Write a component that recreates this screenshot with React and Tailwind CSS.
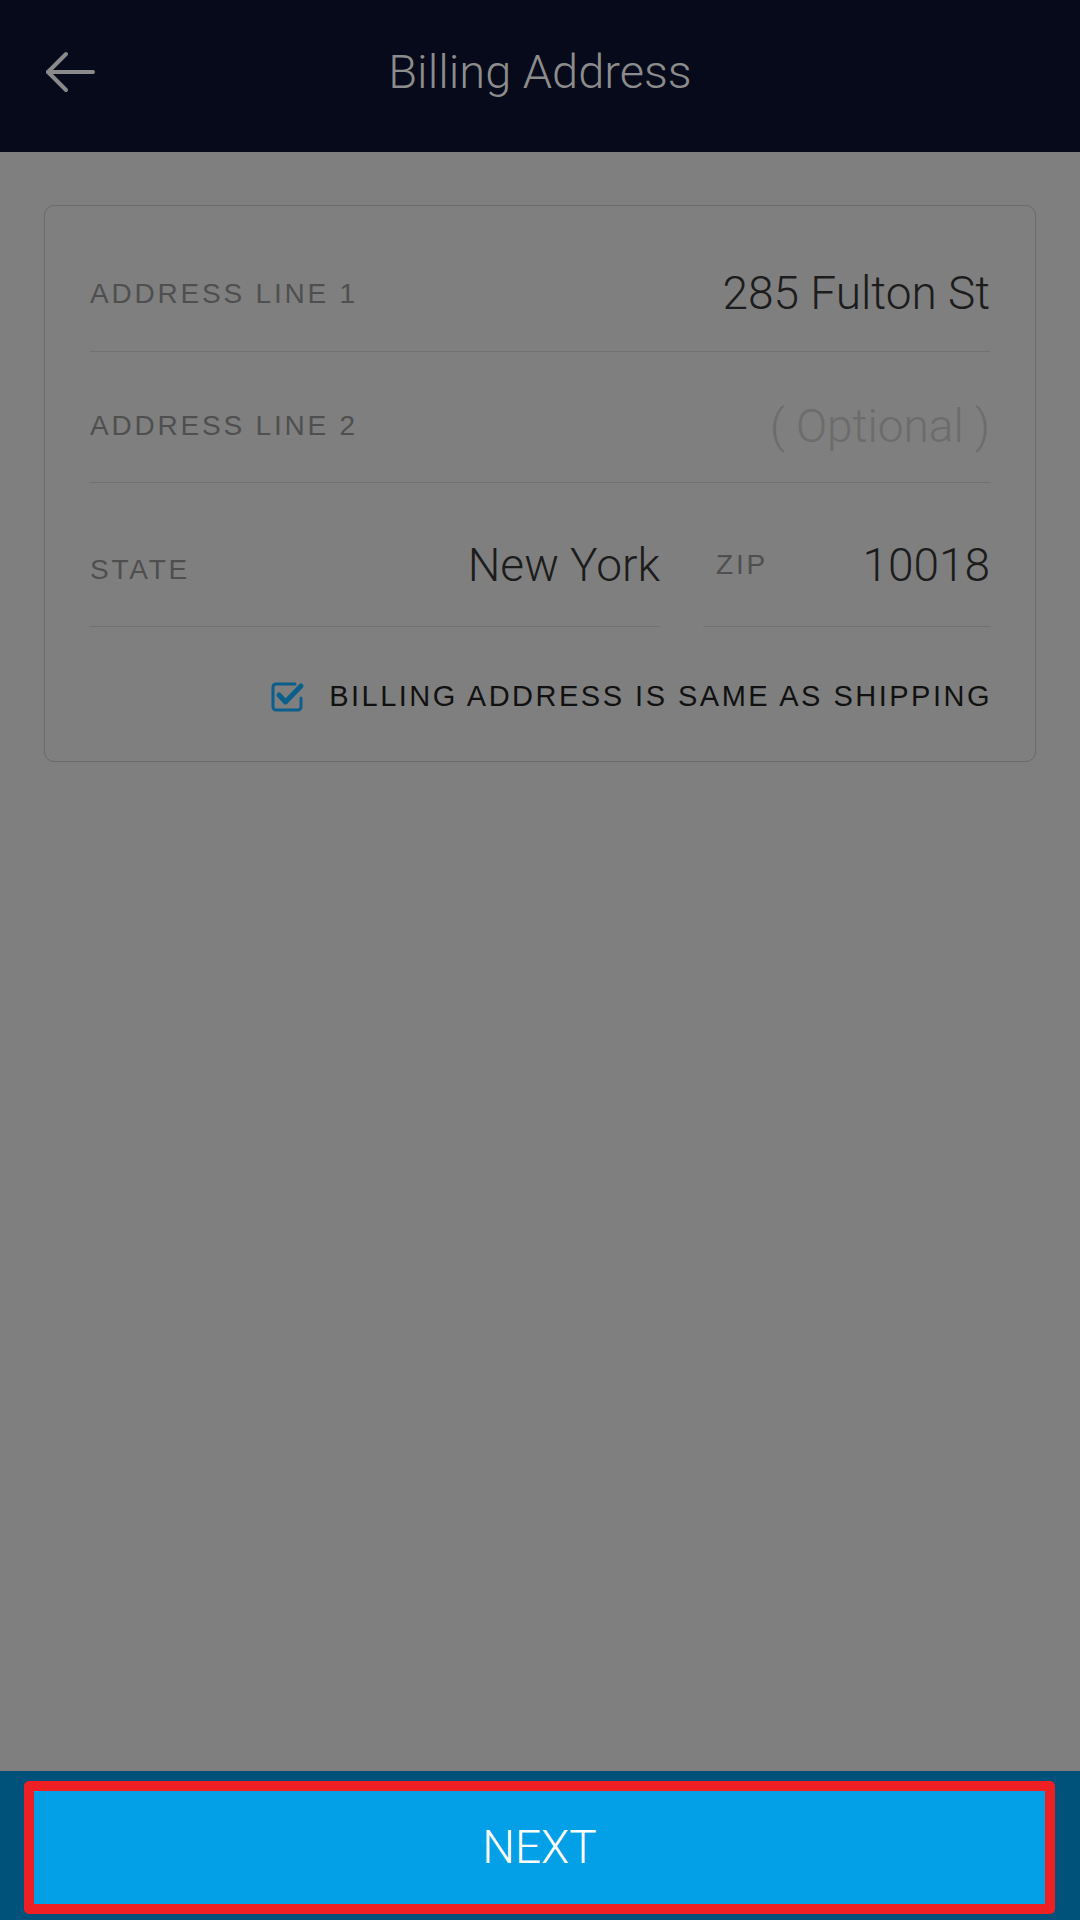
const font = { fontFamily: 'Roboto, "Liberation Sans", Arial, sans-serif' }
const capsFont = { fontFamily: '"Liberation Sans", Arial, sans-serif' }

function Label({ children, className = '' }) {
  return (
    <span style={capsFont} className={`text-[28px] tracking-[2.8px] text-[#4f4f4f] ${className}`}>{children}</span>
  )
}

function Value({ children, className = '' }) {
  return <span className={`text-[46px] font-light text-[#1c1c1c] ${className}`}>{children}</span>
}

function BackArrow() {
  return (
    <svg width="51" height="42" viewBox="0 0 51 42" fill="none" stroke="#8a8a8a" strokeWidth="4" strokeLinecap="round" strokeLinejoin="round">
      <path d="M3 21 H48" />
      <path d="M21 3 L3 21 L21 39" />
    </svg>
  )
}

function CheckIcon() {
  return (
    <svg width="34" height="32" viewBox="0 0 34 32" fill="none">
      <path
        d="M30 17 V26 a3 3 0 0 1 -3 3 H5 a3 3 0 0 1 -3 -3 V6 a3 3 0 0 1 3 -3 H24"
        stroke="#0b5f8c"
        strokeWidth="3"
        strokeLinecap="round"
      />
      <path d="M8 14 L14.5 21 L30 5" stroke="#0b5f8c" strokeWidth="5" strokeLinecap="round" strokeLinejoin="round" />
    </svg>
  )
}

export default function App() {
  return (
    <div style={font} className="w-[1080px] h-[1920px] flex flex-col bg-[#7f7f7f]">
      {/* Header */}
      <div className="h-[152px] shrink-0 bg-[#060a1a] grid grid-cols-[150px_1fr_150px] items-center pb-[8px]">
        <div className="pl-[45px] flex items-center">
          <BackArrow />
        </div>
        <h1 className="text-center text-[47px] font-light text-[#8c8c8c]">Billing Address</h1>
        <div />
      </div>

      {/* Form */}
      <div className="flex-1 px-[44px] pt-[53px]">
        <div className="border border-[#6a6a6a] rounded-[10px] px-[45px]">
          <div className="h-[146px] pt-[30px] flex items-center justify-between border-b border-[#727272]">
            <Label>ADDRESS LINE 1</Label>
            <Value>285 Fulton St</Value>
          </div>
          <div className="h-[131px] pt-[18px] flex items-center justify-between border-b border-[#727272]">
            <Label>ADDRESS LINE 2</Label>
            <span className="text-[46px] font-light text-[#6c6c6c]">( Optional )</span>
          </div>
          <div className="flex gap-[43px]">
            <div className="flex-1 h-[144px] pt-[22px] flex items-center justify-between border-b border-[#727272]">
              <Label className="mt-[8px]">STATE</Label>
              <Value>New York</Value>
            </div>
            <div className="w-[287px] h-[144px] pt-[22px] pl-[13px] flex items-center justify-between border-b border-[#727272]">
              <Label className="mb-[2px]">ZIP</Label>
              <Value>10018</Value>
            </div>
          </div>
          <div className="h-[134px] pt-[6px] flex items-center justify-end gap-[24px]">
            <CheckIcon />
            <span style={capsFont} className="text-[29px] tracking-[2.5px] text-[#111111] -mr-[2px]">BILLING ADDRESS IS SAME AS SHIPPING</span>
          </div>
        </div>
      </div>

      {/* Bottom action */}
      <div className="h-[149px] shrink-0 bg-[#00527a] pt-[10px] pb-[6px] pl-[24px] pr-[25px]">
        <button className="w-full h-full border-[10px] border-[#ee2024] rounded-[5px] bg-[#03a0e8] flex items-center justify-center">
          <span className="text-[46px] font-light text-white">NEXT</span>
        </button>
      </div>
    </div>
  )
}
